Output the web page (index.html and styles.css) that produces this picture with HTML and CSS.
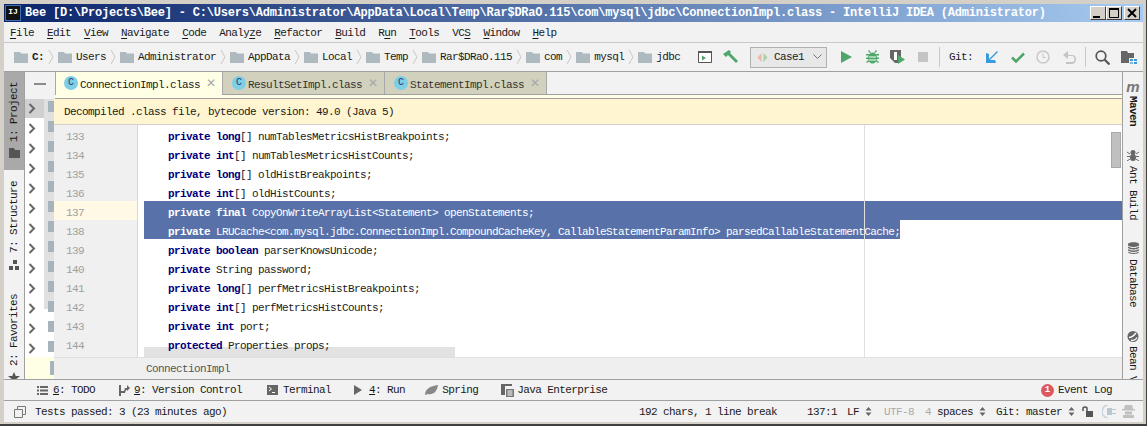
FILE: index.html
```html
<!DOCTYPE html>
<html lang="en">
<head>
<meta charset="utf-8">
<title>Bee</title>
<link rel="stylesheet" href="styles.css">
</head>
<body>
<svg class="defs" width="0" height="0">
  <symbol id="folder" viewBox="0 0 14 11"><path d="M0 0h6l1 1.500h7v9.500h-14z" fill="#aeb9c0"/></symbol>
  <symbol id="chev" viewBox="0 0 6 16"><path d="M1 1l4 7-4 7" fill="none" stroke="#c8c8c8"/></symbol>
  <symbol id="arrow" viewBox="0 0 8 11"><path d="M1.500 1l4.500 4.500-4.500 4.500" fill="none" stroke="#666" stroke-width="2"/></symbol>
  <symbol id="updown" viewBox="0 0 7 9"><path d="M3.500 0l3 3.500h-6zM3.500 9l3-3.500h-6z" fill="#666"/></symbol>
</svg>
<div class="window">
  <header class="titlebar">
    <span class="app-logo">IJ</span>
    <span class="title-text">Bee [D:\Projects\Bee] - C:\Users\Administrator\AppData\Local\Temp\Rar$DRaO.115\com\mysql\jdbc\ConnectionImpl.class - IntelliJ IDEA (Administrator)</span>
    <span class="win-buttons">
      <span class="win-btn"><svg width="16" height="14"><path d="M3 10h7v2h-7z" fill="#000"/></svg></span>
      <span class="win-btn"><svg width="16" height="14"><path d="M3.500 2.500h9v9h-9z" fill="none" stroke="#000"/><path d="M3 2h10v2h-10z"/></svg></span>
      <span class="win-btn close"><svg width="16" height="14"><path d="M4 3l8 8M12 3l-8 8" stroke="#000" stroke-width="2"/></svg></span>
    </span>
  </header>

  <nav class="menubar">
    <span><u>F</u>ile</span><span><u>E</u>dit</span><span><u>V</u>iew</span><span><u>N</u>avigate</span><span><u>C</u>ode</span><span>Analy<u>z</u>e</span><span><u>R</u>efactor</span><span><u>B</u>uild</span><span>R<u>u</u>n</span><span><u>T</u>ools</span><span>VC<u>S</u></span><span><u>W</u>indow</span><span><u>H</u>elp</span>
  </nav>

  <div class="toolbar">
    <div class="crumbs">
      <span class="crumb"><svg class="ico14"><use href="#folder"/></svg><b>C:</b></span><svg class="chev"><use href="#chev"/></svg>
      <span class="crumb"><svg class="ico14"><use href="#folder"/></svg>Users</span><svg class="chev"><use href="#chev"/></svg>
      <span class="crumb"><svg class="ico14"><use href="#folder"/></svg>Administrator</span><svg class="chev"><use href="#chev"/></svg>
      <span class="crumb"><svg class="ico14"><use href="#folder"/></svg>AppData</span><svg class="chev"><use href="#chev"/></svg>
      <span class="crumb"><svg class="ico14"><use href="#folder"/></svg>Local</span><svg class="chev"><use href="#chev"/></svg>
      <span class="crumb"><svg class="ico14"><use href="#folder"/></svg>Temp</span><svg class="chev"><use href="#chev"/></svg>
      <span class="crumb"><svg class="ico14"><use href="#folder"/></svg>Rar$DRaO.115</span><svg class="chev"><use href="#chev"/></svg>
      <span class="crumb"><svg class="ico14"><use href="#folder"/></svg>com</span><svg class="chev"><use href="#chev"/></svg>
      <span class="crumb"><svg class="ico14"><use href="#folder"/></svg>mysql</span><svg class="chev"><use href="#chev"/></svg>
      <span class="crumb"><svg class="ico14"><use href="#folder"/></svg>jdbc</span>
    </div>
    <div class="tools">
      <svg class="tool t-window" width="14" height="12"><path d="M.5.500h13v11h-13z" fill="#fff" stroke="#555"/><path d="M0 0h14v2h-14z" fill="#555"/><path d="M4 4.500l4 2.500-4 2.500z" fill="#4fa66a"/></svg>
      <svg class="tool t-hammer" width="16" height="14"><path d="M0 4l6-4 2 2-1 1 8 8-2 2-8-8-2 2z" fill="#4fa66a"/></svg>
      <span class="combo">
        <svg width="11" height="11"><path d="M4.500 1l-4 4.500 4 4.500z" fill="#eeb7a2"/><path d="M6.500 1l4 4.500-4 4.500z" fill="#a9cfa9"/></svg>
        <span class="combo-label">Case1</span>
        <svg class="combo-caret" width="9" height="6"><path d="M.5.500l4 4 4-4" fill="none" stroke="#777"/></svg>
      </span>
      <svg class="tool t-run" width="11" height="12"><path d="M0 0l11 6-11 6z" fill="#4fa66a"/></svg>
      <svg class="tool t-debug" width="13" height="14"><g fill="#4fa66a"><ellipse cx="6.500" cy="8" rx="4.500" ry="5.500"/><path d="M0 4h2.500l1 1.500h-3.500zM13 4h-2.500l-1 1.500h3.500zM0 7.500h3v1.500h-3zM10 7.500h3v1.500h-3zM0 12l2.500-2 1 1-2.500 2zM13 12l-2.500-2-1 1 2.500 2zM3 0l2 2.500-1 .5-2-2zM10 0l-2 2.500 1 .5 2-2z"/></g><path d="M3 6.500h7v1h-7zM3 9.500h7v1h-7z" fill="#fff"/></svg>
      <svg class="tool t-cover" width="15" height="14"><path d="M0 0h11v8l-3 5h-3l-5-5z" fill="#666"/><path d="M4 2h3v8h-3z" fill="#fff"/><path d="M8 5l7 4.500-7 4.500z" fill="#4fa66a"/></svg>
      <svg class="tool t-stop" width="10" height="10"><path d="M0 0h10v10h-10z" fill="#c4c4c4"/></svg>
      <span class="tool-sep s1"></span>
      <span class="git-label">Git:</span>
      <svg class="tool t-vcs" width="12" height="12"><path d="M12 1l-1-1-8 8v-5l-3-1v10h10l-1-3h-5z" fill="#3a9bdc"/></svg>
      <svg class="tool t-check" width="14" height="11"><path d="M1 5.500l4 4 8-8" fill="none" stroke="#4fa66a" stroke-width="2.500"/></svg>
      <svg class="tool t-clock" width="14" height="14"><circle cx="7" cy="7" r="6" fill="none" stroke="#c8c8c8" stroke-width="1.500"/><path d="M7 3v4.500h3" fill="none" stroke="#c8c8c8"/></svg>
      <svg class="tool t-undo" width="13" height="13"><path d="M5 0l-5 4 5 4v-3h4c2 0 2.500 2 2.500 3s-.5 3-2.500 3h-6v2h6c3 0 4-3 4-5s-1-4-4-4h-4z" fill="#c4c4c4"/></svg>
      <span class="tool-sep s2"></span>
      <svg class="tool t-search" width="15" height="15"><circle cx="6" cy="6" r="4.800" fill="none" stroke="#555" stroke-width="1.700"/><path d="M9.500 9.500l5 5" stroke="#555" stroke-width="2.200"/></svg>
      <svg class="tool t-struct" width="16" height="14"><path d="M0 1h6l1 2h6v5h-5v5h-8z" fill="#666"/><path d="M9 9h3v2h-3zM13 9h3v2h-3zM13 12h3v2h-3z" fill="#3a9bdc"/><path d="M9 12h3v2h-3z" fill="#7fb8dc"/></svg>
    </div>
  </div>

  <div class="middle">
    <aside class="stripe left">
      <div class="stripe-item selected">
        <span class="vtext">1: Project</span>
        <svg width="11" height="10"><path d="M0 0h5l1 2h5v8h-11z" fill="#555"/></svg>
      </div>
      <div class="stripe-item structure">
        <span class="vtext">7: Structure</span>
        <svg width="10" height="10"><path d="M4 0h4v4h-4zM0 6h4v4h-4zM6 6h4v4h-4z" fill="#555"/></svg>
      </div>
      <div class="stripe-item favorites">
        <span class="vtext">2: Favorites</span>
        <svg width="12" height="11"><path d="M6 0l1.800 4h4.200l-3.400 2.700 1.300 4.300-3.900-2.600-3.900 2.600 1.300-4.300-3.400-2.700h4.200z" fill="#555"/></svg>
      </div>
    </aside>

    <div class="center">
      <div class="tabs">
        <span class="hide-btn"></span>
        <div class="tab active"><span class="cls">C</span>ConnectionImpl.class<span class="x">✕</span></div>
        <div class="tab"><span class="cls">C</span>ResultSetImpl.class<span class="x">✕</span></div>
        <div class="tab"><span class="cls">C</span>StatementImpl.class<span class="x">✕</span></div>
      </div>
      <div class="tab-band"></div>
      <div class="work">
        <div class="tree">
          <div class="tree-thumb"></div>
          <div class="tree-rows">
            <div class="tree-row sel"><svg class="arr"><use href="#arrow"/></svg><i></i></div>
            <div class="tree-row"><svg class="arr"><use href="#arrow"/></svg><i></i></div>
            <div class="tree-row"><svg class="arr"><use href="#arrow"/></svg><i></i></div>
            <div class="tree-row"><svg class="arr"><use href="#arrow"/></svg><i></i></div>
            <div class="tree-row"><svg class="arr"><use href="#arrow"/></svg><i></i></div>
            <div class="tree-row"><svg class="arr"><use href="#arrow"/></svg><i></i></div>
            <div class="tree-row"><svg class="arr"><use href="#arrow"/></svg><i></i></div>
            <div class="tree-row"><svg class="arr"><use href="#arrow"/></svg><i></i></div>
            <div class="tree-row"><svg class="arr"><use href="#arrow"/></svg><i></i></div>
            <div class="tree-row"><svg class="arr"><use href="#arrow"/></svg><i></i></div>
            <div class="tree-row"><svg class="arr"><use href="#arrow"/></svg><i></i></div>
            <div class="tree-row"><svg class="arr"><use href="#arrow"/></svg><i></i></div>
            <div class="tree-row"><svg class="arr"><use href="#arrow"/></svg><i></i></div>
          </div>
          <div class="tree-foot"><i></i></div>
        </div>
        <div class="editor-col">
          <div class="notice">Decompiled .class file, bytecode version: 49.0 (Java 5)</div>
          <div class="editor">
            <div class="gutter">
              <div>133</div><div>134</div><div>135</div><div>136</div><div class="cur">137</div><div>138</div><div>139</div><div>140</div><div>141</div><div>142</div><div>143</div><div>144</div>
            </div>
            <div class="code">
              <div class="hscroll"></div>
              <div class="line"><b>private long</b>[] numTablesMetricsHistBreakpoints;</div>
              <div class="line"><b>private int</b>[] numTablesMetricsHistCounts;</div>
              <div class="line"><b>private long</b>[] oldHistBreakpoints;</div>
              <div class="line"><b>private int</b>[] oldHistCounts;</div>
              <div class="line sel-full"><b>private final</b> CopyOnWriteArrayList&lt;Statement&gt; openStatements;</div>
              <div class="line sel-part"><span><b>private</b> LRUCache&lt;com.mysql.jdbc.ConnectionImpl.CompoundCacheKey, CallableStatementParamInfo&gt; parsedCallableStatementCache;</span></div>
              <div class="line"><b>private boolean</b> parserKnowsUnicode;</div>
              <div class="line"><b>private</b> String password;</div>
              <div class="line"><b>private long</b>[] perfMetricsHistBreakpoints;</div>
              <div class="line"><b>private int</b>[] perfMetricsHistCounts;</div>
              <div class="line"><b>private int</b> port;</div>
              <div class="line"><b>protected</b> Properties props;</div>
              <div class="margin-line"></div>
              <div class="vscroll"></div>
            </div>
          </div>
          <div class="ed-crumb">ConnectionImpl</div>
        </div>
      </div>
    </div>

    <aside class="stripe right">
      <div class="r-item maven">
        <span class="m-logo">m</span>
        <span class="vtext-r strong">Maven</span>
      </div>
      <div class="r-item ant">
        <svg width="12" height="11"><g fill="#666"><ellipse cx="6" cy="2.500" rx="2.500" ry="2.500"/><ellipse cx="6" cy="7.500" rx="3" ry="3.500"/></g><path d="M0 2l3 2M12 2l-3 2M0 6.500h3M12 6.500h-3M0 11l3-2M12 11l-3-2" stroke="#666"/></svg>
        <span class="vtext-r">Ant Build</span>
      </div>
      <div class="r-item db">
        <svg width="11" height="12"><path d="M0 2c0-2.500 11-2.500 11 0v8c0 2.500-11 2.500-11 0z" fill="#666"/><path d="M0 4c3 2 8 2 11 0M0 6.500c3 2 8 2 11 0M0 9c3 2 8 2 11 0" fill="none" stroke="#fff"/></svg>
        <span class="vtext-r">Database</span>
      </div>
      <div class="r-item bean">
        <svg width="12" height="11"><circle cx="6" cy="5.500" r="5.500" fill="#666"/><path d="M2 6.500c3 0 5-2 7-4.500M4 9.500c2 0 5-1 6-3" fill="none" stroke="#fff" stroke-width="1.300"/></svg>
        <span class="vtext-r">Bean V</span>
      </div>
    </aside>
  </div>

  <div class="toolwins">
    <span class="tw tw-todo"><svg width="11" height="9"><path d="M0 0h2v2h-2zM3 0h8v2h-8zM0 3.500h2v2h-2zM3 3.500h8v2h-8zM0 7h2v2h-2zM3 7h8v2h-8z" fill="#666"/></svg><span><u>6</u>: TODO</span></span>
    <span class="tw tw-vc"><svg width="11" height="11"><path d="M0 0h2v11h-2zM2 6h3l1-3h2v-3l3 3-3 3v-1h-1l-1 3h-4z" fill="#666"/></svg><span><u>9</u>: Version Control</span></span>
    <span class="tw tw-term"><svg width="11" height="10"><path d="M0 0h11v10h-11z" fill="#666"/><path d="M2 2l2.500 2-2.500 2M5 7.500h3" fill="none" stroke="#fff"/></svg><span>Terminal</span></span>
    <span class="tw tw-run"><svg width="8" height="10"><path d="M0 0l8 5-8 5z" fill="#666"/></svg><span><u>4</u>: Run</span></span>
    <span class="tw tw-spring"><svg width="13" height="10"><path d="M0 10c0-6 5-9 13-10-1 7-5 10-10 9z" fill="#888"/></svg><span>Spring</span></span>
    <span class="tw tw-jee"><svg width="13" height="13"><path d="M0 0h11v2h-11zM0 2h4v9h-4z" fill="#666"/><path d="M5 5h8v8h-8z" fill="#777"/><path d="M6.500 7h5M6.500 9h5M6.500 11h5" stroke="#fff"/></svg><span>Java Enterprise</span></span>
    <span class="tw tw-log"><span class="badge">1</span><span>Event Log</span></span>
  </div>

  <footer class="status">
    <svg class="st-box" width="12" height="12"><path d="M3.500.500h8v8h-8z" fill="none" stroke="#777"/><path d="M.5 3.500h8v8h-8z" fill="#f2f2f2" stroke="#777"/></svg>
    <span class="st-msg">Tests passed: 3 (23 minutes ago)</span>
    <span class="st-chars">192 chars, 1 line break</span>
    <span class="st-pos">137:1</span>
    <span class="st-lf">LF<svg class="ud"><use href="#updown"/></svg></span>
    <span class="st-enc">UTF-8</span>
    <span class="st-ind"><em>4</em> spaces<svg class="ud"><use href="#updown"/></svg></span>
    <span class="st-git">Git: master<svg class="ud"><use href="#updown"/></svg></span>
    <svg class="st-lock" width="11" height="11"><path d="M1 5v-2.500c0-2 4-2 4 0v2.500" fill="none" stroke="#555" stroke-width="1.500"/><path d="M4 5h7v6h-7z" fill="#555"/></svg>
    <svg class="st-plug" width="14" height="13"><path d="M6 0c-3 0-6 3-6 6.500s3 6.500 6 6.500" fill="none" stroke="#c6d4dc" stroke-width="1.500"/><path d="M5 3h5v7h-5z" fill="#b8c8d2"/><path d="M10 4h4v1h-4zM10 8h4v1h-4z" fill="#b8c8d2"/></svg>
    <svg class="st-hector" width="13" height="13"><path d="M3 0h7l1 4h2v1.500h-13v-1.500h2zM3 6.500h7v3h-7zM1 10h11v3h-11z" fill="#c0c0c0"/></svg>
  </footer>
</div>
</body>
</html>
```

FILE: styles.css
```css
* { box-sizing: border-box; }
html, body { margin: 0; padding: 0; }
body { width: 1147px; height: 426px; overflow: hidden; background: #d4d0c8; }
.defs { position: absolute; }
svg { display: block; flex: none; }

.window {
  width: 1147px; height: 426px;
  display: flex; flex-direction: column;
  padding: 4px 3px 2px 4px;
  background: #d4d0c8;
  border-right: 1px solid #404040;
  border-bottom: 2px solid #404040;
  font: 11px/14px "Liberation Mono", "DejaVu Sans Mono", monospace;
  letter-spacing: -0.6px;
  color: #1a1a1a;
  white-space: nowrap;
}

.titlebar {
  height: 18px; flex: none;
  display: flex; align-items: center;
  background: linear-gradient(90deg, #0a246a, #a6caf0);
  color: #fff;
  font-weight: 700; font-size: 12px; letter-spacing: -0.21px;
}
.app-logo {
  width: 16px; height: 16px; margin: 0 4px 0 1px;
  background: #111; color: #fff; font-size: 8px; line-height: 12px; text-align: center;
  border: 1px solid #3d6fb3; letter-spacing: 0;
}
.title-text { flex: 1; }
.win-buttons { display: flex; margin-right: 3px; }
.win-btn {
  width: 16px; height: 14px; background: #d4d0c8;
  border: 1px solid; border-color: #fff #404040 #404040 #fff;
  display: flex; align-items: center; justify-content: center; overflow: hidden;
}
.win-btn svg { margin: -1px; }
.close { margin-left: 2px; }

.menubar {
  height: 21px; flex: none;
  display: flex; align-items: center; gap: 13px;
  padding: 2px 0 0 6px;
  background: #f2f2f2;
  border-bottom: 1px solid #c8c8c8;
}
.menubar u { text-underline-offset: 2px; }

.toolbar {
  height: 29px; flex: none;
  display: flex; align-items: center;
  background: #f2f2f2;
  border-bottom: 1px solid #a0a0a0;
  padding-left: 10px;
}
.crumbs { display: flex; align-items: center; width: 672px; flex: none; overflow: hidden; }
.crumb { display: flex; align-items: center; gap: 4px; }
.crumb b { font-weight: 700; }
.ico14 { width: 14px; height: 11px; }
.chev { width: 6px; height: 16px; margin: 0 4px; }
.tools { display: flex; align-items: center; flex: 1; height: 100%; }
.tool { margin-left: 11px; }
.t-window { margin-left: 12px; }
.combo {
  margin-left: 11px; width: 77px; height: 21px;
  display: flex; align-items: center;
  border: 1px solid #b0b0b0; background: #e8e8e8; padding-left: 6px;
}
.combo-label { margin-left: 6px; }
.combo-caret { margin-left: 9px; }
.t-run { margin-left: 14px; }
.t-debug { margin-left: 14px; }
.t-cover { margin-left: 11px; }
.t-stop { margin-left: 13px; }
.tool-sep { width: 1px; height: 20px; background: #c8c8c8; flex: none; }
.s1 { margin-left: 11px; }
.git-label { margin-left: 9px; }
.t-vcs { margin-left: 13px; }
.t-check { margin-left: 13px; }
.t-clock { margin-left: 11px; }
.t-undo { margin-left: 13px; }
.s2 { margin-left: 9px; }
.t-search { margin-left: 9px; }
.t-struct { margin-left: 11px; }

.middle { flex: 1; display: flex; min-height: 0; }

.stripe { flex: none; background: #f2f2f2; overflow: hidden; }
.stripe.left { width: 21px; border-right: 1px solid #a0a0a0; display: flex; flex-direction: column; }
.stripe.right { width: 21px; border-left: 1px solid #a0a0a0; }
.stripe-item { display: flex; flex-direction: column; align-items: center; flex: none; }
.stripe-item.selected { height: 98px; background: #a9a9a9; padding-top: 10px; }
.stripe-item.selected svg { margin-top: 6px; }
.stripe-item.structure { margin-top: 11px; }
.stripe-item.structure svg { margin-top: 7px; }
.stripe-item.favorites { margin-top: 24px; }
.stripe-item.favorites svg { margin-top: 6px; }
.vtext { writing-mode: vertical-rl; transform: rotate(180deg); }
.vtext-r { writing-mode: vertical-rl; }
.strong { font-weight: 700; }
.r-item { display: flex; flex-direction: column; align-items: center; }
.maven { margin-top: 9px; height: 69px; }
.m-logo { font: italic 700 15px/11px "Liberation Sans", sans-serif; color: #777; letter-spacing: 0; margin-bottom: 4px; }
.ant { height: 92px; }
.ant svg, .db svg { margin-bottom: 5px; }
.db { height: 89px; }
.bean svg { margin-bottom: 4px; }

.center { flex: 1; min-width: 0; display: flex; flex-direction: column; background: #f2f2f2; }

.tabs { height: 22px; flex: none; display: flex; background: #f2f2f2; position: relative; z-index: 1; }
.hide-btn { width: 30px; flex: none; position: relative; }
.hide-btn::after { content: ""; position: absolute; left: 9px; top: 11px; width: 12px; height: 2px; background: #8a8a8a; }
.tab {
  width: 162px; flex: none;
  display: flex; align-items: center;
  padding: 3px 0 0 9px;
  background: #d1d1bd;
  border-right: 1px solid #a8a8a8;
  color: #333;
}
.tab.active {
  width: 168px; height: 23px;
  padding-bottom: 1px;
  background: #ffffe6; color: #1a1a1a;
  border-left: 1px solid #a8a8a8;
  padding-left: 8px;
}
.cls {
  width: 14px; height: 14px; border-radius: 50%;
  background: #7ccfe6; color: #336; font-size: 10px; line-height: 14px; text-align: center;
  margin: -3px 2px 0 0; flex: none; letter-spacing: 0;
}
.x { margin: -3px 0 0 6px; color: #a8a8a8; font: 12px/12px "DejaVu Sans", sans-serif; letter-spacing: 0; }

.tab-band { height: 5px; flex: none; margin-left: 30px; background: #ffffe6; border-top: 1px solid #a0a0a0; border-bottom: 1px solid #a0a0a0; }

.work { flex: 1; display: flex; min-height: 0; background: #fff; }
.tree { width: 29px; flex: none; position: relative; background: #fff; display: flex; flex-direction: column; }
.tree-rows { flex: 1; min-height: 0; overflow: hidden; position: relative; }
.tree-thumb { position: absolute; left: 19px; top: 0; width: 10px; height: 210px; background: #e0e0e0; }
.tree-row { height: 20px; display: flex; align-items: center; }
.tree-row.sel { height: 19px; background: linear-gradient(90deg, #d0d0d0 19px, transparent 19px); }
.tree-row .arr { width: 8px; height: 11px; margin-left: 3px; }
.tree-row i { width: 6px; height: 11px; background: #a8b4bc; margin: -4px 0 0 12px; }
.tree-foot { height: 22px; flex: none; background: #ffffe6; display: flex; align-items: center; position: relative; }
.tree-foot i { margin-left: 25px; width: 4px; height: 14px; background: #a8b4bc; }

.editor-col { flex: 1; min-width: 0; display: flex; flex-direction: column; }
.notice {
  height: 26px; flex: none; line-height: 27px; padding-left: 10px;
  background: #fff5d0; border-bottom: 1px solid #d0d0d0;
}
.editor { flex: 1; min-height: 0; display: flex; overflow: hidden; }
.gutter {
  width: 84px; flex: none; background: #f0f0f0; border-right: 1px solid #d8d8d8;
  color: #a0a0a0;
}
.gutter div { height: 19px; line-height: 15px; padding: 5px 0 0 12px; }
.gutter .cur { background: #fff9e6; }
.code { flex: 1; min-width: 0; position: relative; }
.margin-line { position: absolute; left: 726px; top: 0; bottom: 0; width: 1px; background: #e0e0e0; }
.line { height: 19px; line-height: 15px; position: relative; padding: 5px 0 0 30px; }
.line b { color: #000080; }
.sel-full { margin-left: 6px; padding-left: 24px; background: #5872a9; color: #fff; }
.sel-full b, .sel-part b { color: #fff; }
.sel-part { margin-left: 6px; padding: 0; color: #fff; }
.sel-part span { display: block; width: 756px; height: 19px; padding: 5px 0 0 24px; background: #5872a9; }
.hscroll { position: absolute; left: 6px; bottom: 0; width: 311px; height: 10px; background: #e2e2e2; }
.vscroll { position: absolute; right: 1px; top: 7px; width: 10px; height: 36px; background: #c0c0c0; border: 1px solid #a8a8a8; }
.ed-crumb { height: 22px; flex: none; line-height: 22px; padding-left: 92px; background: #efefef; border-top: 1px solid #e0e0e0; color: #555; }

.toolwins {
  height: 22px; flex: none;
  display: flex; align-items: center;
  background: #f2f2f2;
  border-top: 1px solid #a0a0a0;
  border-bottom: 1px solid #a0a0a0;
  padding-left: 33px;
}
.tw { display: flex; align-items: center; gap: 5px; }
.tw-vc { margin-left: 24px; gap: 4px; }
.tw-term { margin-left: 25px; }
.tw-run { margin-left: 23px; gap: 7px; }
.tw-spring { margin-left: 20px; gap: 4px; }
.tw-jee { margin-left: 23px; gap: 3px; }
.tw-log { margin-left: auto; margin-right: 31px; gap: 4px; }
.badge {
  width: 13px; height: 13px; border-radius: 50%; background: #db5860; color: #fff;
  font-size: 9px; line-height: 13px; text-align: center; font-weight: 700; letter-spacing: 0;
}

.status { height: 21px; flex: none; display: flex; align-items: center; background: #f2f2f2; padding-left: 10px; }
.status > span { flex: none; }
.st-msg { margin-left: 9px; width: 604px; }
.st-pos { margin-left: 30px; }
.st-lf, .st-ind, .st-git { display: inline-flex; align-items: center; }
.ud { width: 7px; height: 9px; margin-left: 6px; }
.st-lf { margin-left: 10px; }
.st-enc { margin-left: 12px; color: #aaa; }
.st-ind { margin-left: 11px; }
.st-ind em { font-style: normal; color: #aaa; margin-right: 6px; }
.st-git { margin-left: 10px; }
.st-lock { margin-left: 7px; }
.st-plug { margin-left: 9px; }
.st-hector { margin-left: 6px; }
```
